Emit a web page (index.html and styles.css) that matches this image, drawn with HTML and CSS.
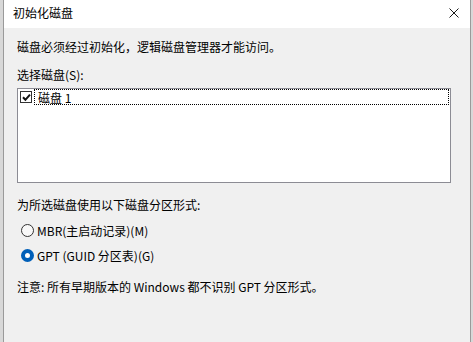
FILE: index.html
```html
<!DOCTYPE html>
<html lang="zh-CN">
<head>
    <meta charset="UTF-8">
    <title>初始化磁盘</title>
    <link rel="stylesheet" href="styles.css">
</head>
<body>
    <div class="dialog">
        <div class="titlebar">
            <span class="title">初始化磁盘</span>
            <svg class="close" width="10" height="10" viewBox="0 0 10 10">
                <path d="M0.5 0.5 L9.5 9.5 M9.5 0.5 L0.5 9.5" stroke="#1a1a1a" stroke-width="1"/>
            </svg>
        </div>
        <div class="content">
            <div class="line intro">磁盘必须经过初始化，逻辑磁盘管理器才能访问。</div>
            <div class="line label">选择磁盘(S):</div>
            <div class="listbox">
                <div class="list-item">
                    <span class="checkbox">
                        <svg width="9" height="9" viewBox="0 0 9 9">
                            <path d="M1 4.3 L3.4 6.8 L8 1.6" fill="none" stroke="#111" stroke-width="2"/>
                        </svg>
                    </span>
                    <span class="item-text">磁盘 1</span>
                </div>
            </div>
            <div class="line style-label">为所选磁盘使用以下磁盘分区形式:</div>
            <div class="radio-row first">
                <span class="radio"></span>
                <span>MBR(主启动记录)(M)</span>
            </div>
            <div class="radio-row second">
                <span class="radio checked"></span>
                <span>GPT (GUID 分区表)(G)</span>
            </div>
            <div class="line note">注意: 所有早期版本的 Windows 都不识别 GPT 分区形式。</div>
        </div>
    </div>
</body>
</html>
```

FILE: styles.css
```css
body {
    margin: 0;
    width: 473px;
    height: 342px;
    overflow: hidden;
    background: #d8d8d8;
    font-family: "Noto Sans CJK SC", "Noto Sans", sans-serif;
    font-size: 12px;
    color: #000;
}
.dialog {
    margin-left: 3px;
    width: 466px;
    height: 342px;
    border-left: 1px solid #9a9a9a;
    border-right: 1px solid #9a9a9a;
    background: #f0f0f0;
}
.titlebar {
    height: 28px;
    background: #fff;
    display: flex;
    align-items: center;
    justify-content: space-between;
    padding: 0 11px 2px 9px;
    box-sizing: border-box;
}
.title {
    line-height: 16px;
}
.close {
    display: block;
}
.content {
    padding-left: 13px;
}
.line {
    line-height: 16px;
    white-space: nowrap;
}
.intro {
    padding-top: 11px;
}
.label {
    margin-top: 12px;
}
.listbox {
    margin-top: 5px;
    width: 432px;
    height: 93px;
    border: 1px solid #8c8c94;
    background: #fff;
}
.list-item {
    display: flex;
    align-items: center;
    height: 16px;
}
.checkbox {
    width: 12px;
    height: 12px;
    margin-left: 2px;
    border: 1px solid #333;
    background: #fff;
    display: flex;
    align-items: center;
    justify-content: center;
    box-sizing: border-box;
}
.item-text {
    flex-grow: 1;
    margin-left: 2px;
    margin-right: 1px;
    height: 16px;
    line-height: 15px;
    padding-left: 3px;
    border: 1px dotted #000;
    box-sizing: border-box;
}
.style-label {
    margin-top: 14px;
}
.radio-row {
    display: flex;
    align-items: center;
    gap: 3px;
    height: 18px;
    padding-left: 4px;
}
.radio-row.first {
    margin-top: 8px;
}
.radio-row.second {
    margin-top: 7px;
}
.radio {
    width: 13px;
    height: 13px;
    border-radius: 50%;
    border: 1px solid #333;
    box-sizing: border-box;
    background: #f8f8f8;
}
.radio.checked {
    border: 4px solid #005fb8;
    background: #fff;
}
.note {
    margin-top: 15px;
}
```
